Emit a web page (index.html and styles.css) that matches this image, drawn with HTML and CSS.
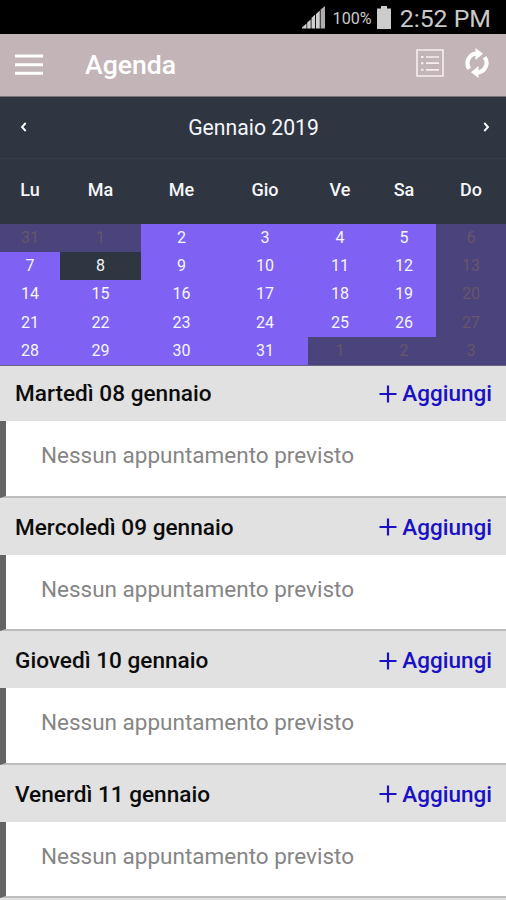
FILE: index.html
```html
<!DOCTYPE html>
<html lang="it">
<head>
<meta charset="utf-8">
<title>Agenda</title>
<link rel="stylesheet" href="styles.css">
</head>
<body>
<div class="status">
  <svg class="signal" width="24" height="23" viewBox="0 0 24 23"><path d="M0 22.500V21.500l4.500-4v5zM5.200 22.500v-6l3.500-3v9zM9.500 22.500V12l3.600-3.500v14zM14 22.500V8l3.800-3.500v18z" fill="#cfcfcf"/><path d="M18.600 22.500V3.500L23 0v22.500z" fill="#adadad"/></svg>
  <span class="percent">100%</span>
  <svg class="battery" width="14" height="23" viewBox="0 0 14 23"><path d="M4 0h6v2.500h4V23H0V2.500h4z" fill="#ccc"/></svg>
  <span class="clock">2:52 PM</span>
</div>
<header class="appbar">
  <svg class="menu" width="28" height="22" viewBox="0 0 28 22"><path d="M0 2h28M0 10.700h28M0 19.300h28" stroke="#fff" stroke-width="3"/></svg>
  <h1 class="title">Agenda</h1>
  <svg class="list-icon" width="28" height="28" viewBox="0 0 28 28" fill="none" stroke="#f8eef0"><path d="M1 1h26v26H1z" stroke-width="1.600"/><path d="M10 8h13M10 14.200h13M10 20.800h13" stroke-width="1.700"/><path d="M5 8h2.500M5 14.200h2.500M5 20.800h2.500" stroke-width="2"/></svg>
  <svg class="sync" width="24" height="30" viewBox="0 0 24 30"><g id="arrow"><path d="M4.400 20.800A9.600 9.600 0 0 1 11.500 5.500" fill="none" stroke="#fff" stroke-width="4.200"/><path d="M10.500 0l7.500 5.800-7.500 6.200z" fill="#fff"/></g><use href="#arrow" transform="rotate(180 12 15)"/></svg>
</header>
<section class="calendar">
  <div class="month">
    <svg width="7" height="10" viewBox="0 0 7 10"><path d="M5.700 1L2 5l3.700 4" fill="none" stroke="#fff" stroke-width="1.900"/></svg>
    <span class="month-name">Gennaio 2019</span>
    <svg width="7" height="10" viewBox="0 0 7 10"><path d="M1.300 1L5 5 1.300 9" fill="none" stroke="#fff" stroke-width="1.900"/></svg>
  </div>
  <div class="week names"><span>Lu</span><span>Ma</span><span>Me</span><span>Gio</span><span>Ve</span><span>Sa</span><span>Do</span></div>
  <div class="week days">
    <span class="off">31</span><span class="off">1</span><span>2</span><span>3</span><span>4</span><span>5</span><span class="off">6</span>
    <span>7</span><span class="today">8</span><span>9</span><span>10</span><span>11</span><span>12</span><span class="off">13</span>
    <span>14</span><span>15</span><span>16</span><span>17</span><span>18</span><span>19</span><span class="off">20</span>
    <span>21</span><span>22</span><span>23</span><span>24</span><span>25</span><span>26</span><span class="off">27</span>
    <span>28</span><span>29</span><span>30</span><span>31</span><span class="off">1</span><span class="off">2</span><span class="off">3</span>
  </div>
</section>
<main>
  <section class="day"><div class="day-head"><h2>Martedì 08 gennaio</h2><a class="add"><svg width="18" height="18" viewBox="0 0 18 18"><path d="M9 .5v17M.5 9h17" stroke="#1a10c4" stroke-width="2.200"/></svg>Aggiungi</a></div><p class="empty">Nessun appuntamento previsto</p></section>
  <section class="day"><div class="day-head"><h2>Mercoledì 09 gennaio</h2><a class="add"><svg width="18" height="18" viewBox="0 0 18 18"><path d="M9 .5v17M.5 9h17" stroke="#1a10c4" stroke-width="2.200"/></svg>Aggiungi</a></div><p class="empty">Nessun appuntamento previsto</p></section>
  <section class="day"><div class="day-head"><h2>Giovedì 10 gennaio</h2><a class="add"><svg width="18" height="18" viewBox="0 0 18 18"><path d="M9 .5v17M.5 9h17" stroke="#1a10c4" stroke-width="2.200"/></svg>Aggiungi</a></div><p class="empty">Nessun appuntamento previsto</p></section>
  <section class="day"><div class="day-head"><h2>Venerdì 11 gennaio</h2><a class="add"><svg width="18" height="18" viewBox="0 0 18 18"><path d="M9 .5v17M.5 9h17" stroke="#1a10c4" stroke-width="2.200"/></svg>Aggiungi</a></div><p class="empty">Nessun appuntamento previsto</p></section>
</main>
</body>
</html>
```
FILE: styles.css
```css
* { box-sizing: border-box; }
body {
  margin: 0;
  height: 900px;
  overflow: hidden;
  background: #e1e1e1;
  font-family: Roboto, "Liberation Sans", sans-serif;
}
h1, h2, p { margin: 0; }
svg { display: block; flex: none; }
.status {
  display: flex;
  align-items: center;
  justify-content: flex-end;
  height: 34px;
  padding: 1px 15px 0 0;
  background: #000;
  color: #c9c9c9;
}
.percent { margin-left: 7px; padding-top: 1px; font-size: 16.2px; }
.battery { margin-left: 5px; }
.clock { margin-left: 9px; font-size: 24.8px; line-height: 34px; padding-top: 3px; }
.appbar {
  display: flex;
  align-items: center;
  height: 63px;
  padding: 0 17px 4px 15px;
  background: #c3b4b7;
  border-bottom: 1px solid #777579;
}
.menu { margin-top: 3px; }
.title {
  flex: 1;
  margin: 3px 0 0 42px;
  color: #fff;
  font-size: 26.6px;
  line-height: 30px;
  font-weight: 500;
}
.sync { margin-left: 21px; }
.calendar { height: 269px; background: #2f3541; color: #f4f6fa; }
.month {
  display: flex;
  align-items: center;
  justify-content: space-between;
  height: 62px;
  padding: 0 16px 1px 20px;
  border-bottom: 1px solid #383e49;
  font-size: 21.2px;
}
.month-name { padding-right: 3px; }
.week {
  display: grid;
  grid-template-columns: 60px 81px 81px 86px 64px 64px 70px;
  text-align: center;
}
.names { height: 65px; line-height: 62px; font-size: 18px; font-weight: 500; }
.days {
  grid-template-rows: repeat(5, 28.2px);
  height: 142px;
  border-bottom: 1px solid #6a6283;
  background: #7f62f3;
  font-size: 16px;
  line-height: 27px;
}
.off { background: #4b447c; color: #675568; }
.today { background: #2f3541; }
.day { height: 133.6px; }
.day-head {
  display: flex;
  align-items: center;
  justify-content: space-between;
  height: 55px;
  padding: 0 14px 0 15px;
}
.day-head h2 { padding-top: 1px; font-size: 22.6px; line-height: 26px; font-weight: 500; color: #0c0c0c; }
.add {
  display: flex;
  align-items: center;
  gap: 5px;
  color: #1a10c4;
  font-size: 22.5px;
  line-height: 25px;
  font-weight: 500;
}
.empty {
  height: 76.5px;
  padding-left: 35px;
  border-left: 6px solid #646464;
  border-bottom: 2px solid #bdbdbd;
  background: #fff;
  color: #858585;
  font-size: 22.5px;
  line-height: 68.4px;
}
```
